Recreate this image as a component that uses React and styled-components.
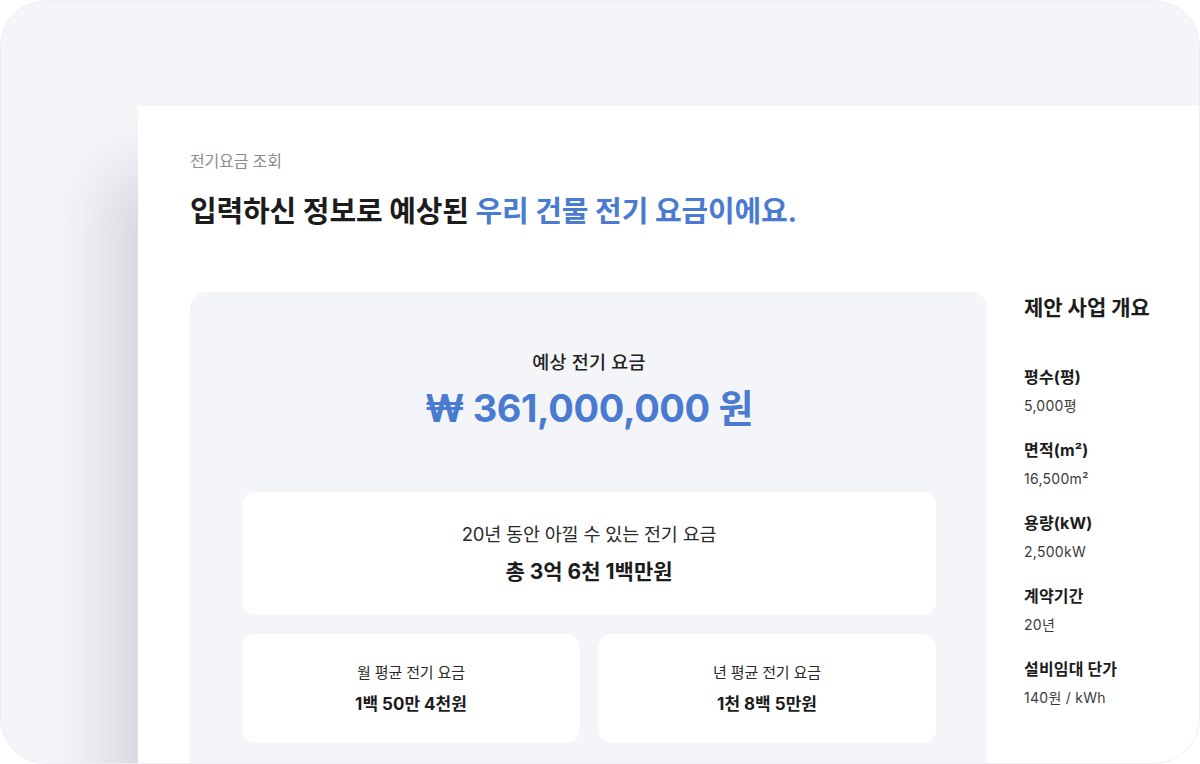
import styled, { createGlobalStyle } from "styled-components";

const GlobalStyle = createGlobalStyle`
  html, body {
    margin: 0;
    padding: 0;
    background: #ffffff;
  }
  body {
    font-family: Inter, "Noto Sans CJK KR", "Noto Sans", sans-serif;
    -webkit-font-smoothing: antialiased;
  }
  * {
    box-sizing: border-box;
  }
`;

const overview = [
  { label: "평수(평)", value: "5,000평" },
  { label: "면적(m²)", value: "16,500m²" },
  { label: "용량(kW)", value: "2,500kW" },
  { label: "계약기간", value: "20년" },
  { label: "설비임대 단가", value: "140원 / kWh" },
];

const averages = [
  { label: "월 평균 전기 요금", value: "1백 50만 4천원" },
  { label: "년 평균 전기 요금", value: "1천 8백 5만원" },
];

export default function App() {
  return (
    <>
      <GlobalStyle />
      <Frame>
        <Panel>
          <Eyebrow>전기요금 조회</Eyebrow>
          <Heading>
            입력하신 정보로 예상된 <em>우리 건물 전기 요금이에요.</em>
          </Heading>
          <Body>
            <Summary>
              <SummaryLabel>예상 전기 요금</SummaryLabel>
              <Amount>₩ 361,000,000 원</Amount>
              <SavingCard>
                <CardLabel $size={18.5}>20년 동안 아낄 수 있는 전기 요금</CardLabel>
                <CardValue $size={21}>총 3억 6천 1백만원</CardValue>
              </SavingCard>
              <CardRow>
                {averages.map((a) => (
                  <SmallCard key={a.label}>
                    <CardLabel $size={15}>{a.label}</CardLabel>
                    <CardValue $size={17}>{a.value}</CardValue>
                  </SmallCard>
                ))}
              </CardRow>
            </Summary>
            <Overview>
              <OverviewTitle>제안 사업 개요</OverviewTitle>
              <List>
                {overview.map((o) => (
                  <Item key={o.label}>
                    <ItemLabel>{o.label}</ItemLabel>
                    <ItemValue>{o.value}</ItemValue>
                  </Item>
                ))}
              </List>
            </Overview>
          </Body>
        </Panel>
      </Frame>
    </>
  );
}

const Frame = styled.div`
  width: 1200px;
  height: 764px;
  border-radius: 46px;
  border: 1px solid #eceef2;
  background: #f4f5f9;
  overflow: hidden;
  display: flex;
  padding: 105px 0 0 137px;
`;

const Panel = styled.section`
  flex: 1;
  background: #ffffff;
  padding: 44px 0 0 52px;
  box-shadow: -28px 70px 60px rgba(40, 46, 70, 0.16);
`;

const Eyebrow = styled.p`
  margin: 0;
  font-size: 16px;
  line-height: 22px;
  color: #8c8c8c;
  letter-spacing: -0.01em;
`;

const Heading = styled.h1`
  margin: 20px 0 0;
  font-size: 29px;
  line-height: 40px;
  font-weight: 700;
  color: #1c1c1c;
  letter-spacing: -0.005em;

  em {
    font-style: normal;
    color: #4a7bd0;
  }
`;

const Body = styled.div`
  display: flex;
  gap: 37px;
  margin-top: 60px;
`;

const Summary = styled.div`
  width: 797px;
  flex-shrink: 0;
  background: #f4f5f9;
  border-radius: 16px;
  padding: 57px 51px 40px 52px;
  display: flex;
  flex-direction: column;
  align-items: center;
`;

const SummaryLabel = styled.div`
  font-size: 18.5px;
  line-height: 26px;
  font-weight: 500;
  color: #222222;
  letter-spacing: 0.01em;
`;

const Amount = styled.div`
  margin-top: 9px;
  font-size: 38px;
  line-height: 48px;
  font-weight: 700;
  color: #4a7bd0;
  letter-spacing: -0.01em;
`;

const SavingCard = styled.div`
  margin-top: 60px;
  width: 100%;
  height: 123px;
  background: #ffffff;
  border-radius: 14px;
  display: flex;
  flex-direction: column;
  align-items: center;
  justify-content: center;
  gap: 9px;
`;

const CardRow = styled.div`
  margin-top: 19px;
  width: 100%;
  display: grid;
  grid-template-columns: 1fr 1fr;
  gap: 18px;
`;

const SmallCard = styled.div`
  height: 109px;
  background: #ffffff;
  border-radius: 14px;
  display: flex;
  flex-direction: column;
  align-items: center;
  justify-content: center;
  gap: 8px;
`;

const CardLabel = styled.div`
  font-size: ${(p) => p.$size}px;
  line-height: ${(p) => Math.round(p.$size + 8)}px;
  font-weight: 400;
  color: #2a2a2a;
  letter-spacing: -0.01em;
`;

const CardValue = styled.div`
  font-size: ${(p) => p.$size}px;
  line-height: ${(p) => Math.round(p.$size + 8)}px;
  font-weight: 700;
  color: #1c1c1c;
  letter-spacing: 0;
`;

const Overview = styled.aside`
  flex: 1;
  padding-top: 2px;
`;

const OverviewTitle = styled.h2`
  margin: 0;
  font-size: 21px;
  line-height: 28px;
  font-weight: 700;
  color: #1c1c1c;
  letter-spacing: 0;
`;

const List = styled.ul`
  list-style: none;
  margin: 43px 0 0;
  padding: 0;
  display: flex;
  flex-direction: column;
  gap: 22px;
`;

const Item = styled.li`
  display: flex;
  flex-direction: column;
  gap: 7px;
`;

const ItemLabel = styled.span`
  font-size: 16px;
  line-height: 24px;
  font-weight: 700;
  color: #1c1c1c;
  letter-spacing: 0.01em;
`;

const ItemValue = styled.span`
  font-size: 14px;
  line-height: 20px;
  color: #3a3a3a;
  letter-spacing: 0.02em;
`;
